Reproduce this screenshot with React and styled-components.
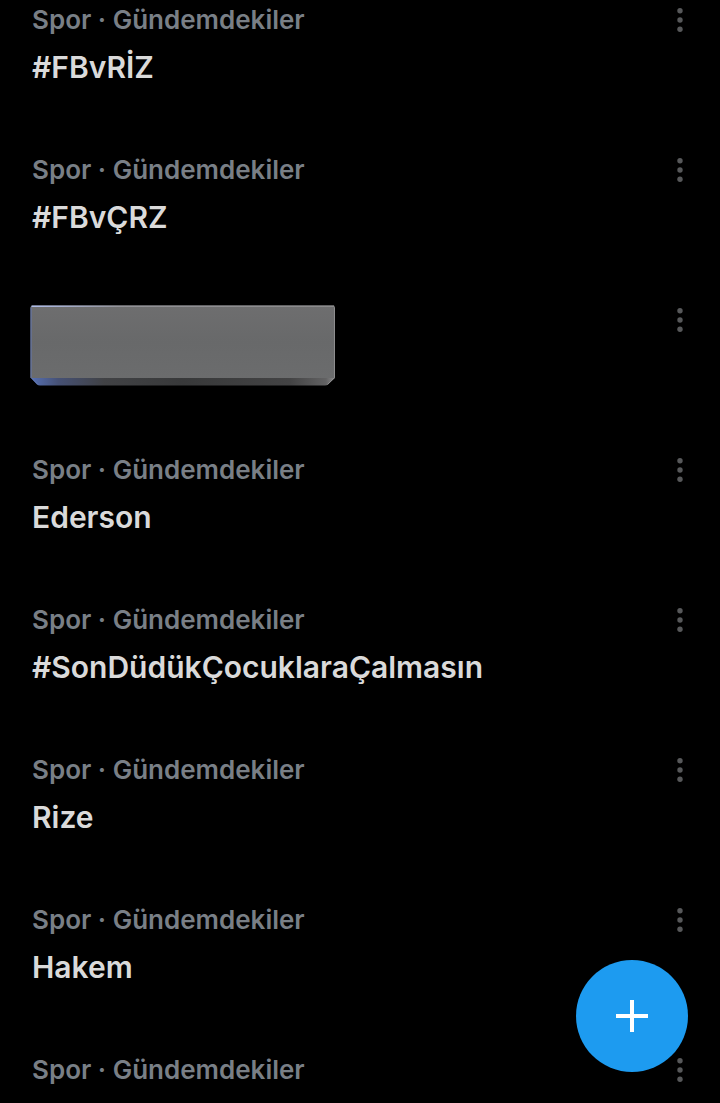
import React from 'react';
import styled, { createGlobalStyle } from 'styled-components';

const GlobalStyle = createGlobalStyle`
  * { box-sizing: border-box; }
  body { margin: 0; background: #000; font-family: Inter, "Liberation Sans", sans-serif; }
`;

const Page = styled.main`
  min-height: 100vh;
  background: #000;
`;

const TrendList = styled.ul`
  list-style: none;
  margin: 0;
  padding: 4px 32px 0;
  display: flex;
  flex-direction: column;
  gap: 66px;
`;

const Trend = styled.li`
  display: flex;
  justify-content: space-between;
  align-items: flex-start;
  min-height: ${({ $partial }) => ($partial ? '32px' : '84px')};
`;

const TrendText = styled.div`
  display: flex;
  flex-direction: column;
  gap: 11px;
  min-width: 0;
`;

const Category = styled.span`
  font-size: 26px;
  font-weight: 600;
  line-height: 32px;
  color: #797f86;
`;

const Topic = styled.a`
  font-size: 30px;
  font-weight: 600;
  line-height: 40px;
  color: #dadada;
  text-decoration: none;
`;

const MoreButton = styled.button`
  display: flex;
  justify-content: center;
  width: 16px;
  height: 32px;
  padding: 0;
  border: 0;
  background: none;
  cursor: pointer;
`;

const Cover = styled.svg`
  display: block;
  margin: 1px 0 0 -2px;
`;

const ComposeButton = styled.button`
  position: fixed;
  right: 32px;
  bottom: 31px;
  width: 112px;
  height: 112px;
  padding: 0;
  border: 0;
  border-radius: 50%;
  background: #1d9bf0;
  display: flex;
  align-items: center;
  justify-content: center;
  cursor: pointer;
`;

const trends = [
  { id: 1, topic: '#FBvRİZ' },
  { id: 2, topic: '#FBvÇRZ' },
  { id: 3, covered: true },
  { id: 4, topic: 'Ederson' },
  { id: 5, topic: '#SonDüdükÇocuklaraÇalmasın' },
  { id: 6, topic: 'Rize' },
  { id: 7, topic: 'Hakem' },
  { id: 8 },
];

function CoveredTrend() {
  return (
    <Cover width="306" height="81" viewBox="0 0 306 81" aria-hidden="true">
      <defs>
        <linearGradient id="face" x1="0" y1="0" x2="0" y2="1">
          <stop offset="0" stopColor="#6e6e6f" />
          <stop offset="0.5" stopColor="#68696a" />
          <stop offset="1" stopColor="#6b6c6d" />
        </linearGradient>
        <linearGradient id="bevel" x1="0" y1="0" x2="1" y2="0">
          <stop offset="0" stopColor="#5670b4" />
          <stop offset="0.09" stopColor="#465175" />
          <stop offset="0.24" stopColor="#414245" />
          <stop offset="0.5" stopColor="#38393a" />
          <stop offset="0.85" stopColor="#434344" />
          <stop offset="0.97" stopColor="#626263" />
          <stop offset="1" stopColor="#8b8b8c" />
        </linearGradient>
        <linearGradient id="edge" gradientUnits="userSpaceOnUse" x1="0" y1="0" x2="306" y2="0">
          <stop offset="0" stopColor="#aebcea" />
          <stop offset="0.3" stopColor="#929297" />
          <stop offset="1" stopColor="#8a8a8b" />
        </linearGradient>
      </defs>
      <path d="M1 73H305L298 79.500Q297 80.500 295 80.500H10Q8 80.500 7 79.500Z" fill="url(#bevel)" />
      <path d="M2 0.500H304L305 2V73H0.500V2Z" fill="url(#face)" />
      <path d="M1.500 1.200H304" stroke="url(#edge)" strokeWidth="1.400" />
      <path d="M1 2.500V72.500L8 79.500" fill="none" stroke="#6479b2" />
      <path d="M304.500 2.500V72.500L297.500 79.500" fill="none" stroke="#8d8d8e" />
    </Cover>
  );
}

function MoreIcon() {
  return (
    <svg width="8" height="32" viewBox="0 0 8 32" fill="#57585a" aria-hidden="true">
      <circle cx="4" cy="6.7" r="2.7" />
      <circle cx="4" cy="16" r="2.7" />
      <circle cx="4" cy="25.3" r="2.7" />
    </svg>
  );
}

export default function App() {
  return (
    <Page>
      <GlobalStyle />
      <TrendList>
        {trends.map(({ id, topic, covered }) => (
          <Trend key={id} $partial={!topic && !covered}>
            {covered ? (
              <CoveredTrend />
            ) : (
              <TrendText>
                <Category>Spor · Gündemdekiler</Category>
                {topic && <Topic href="#">{topic}</Topic>}
              </TrendText>
            )}
            <MoreButton type="button" aria-label="Daha fazla">
              <MoreIcon />
            </MoreButton>
          </Trend>
        ))}
      </TrendList>
      <ComposeButton type="button" aria-label="Yeni gönderi">
        <svg width="32" height="32" viewBox="0 0 32 32" aria-hidden="true">
          <path d="M16 0V32M0 16H32" stroke="#fff" strokeWidth="4" />
        </svg>
      </ComposeButton>
    </Page>
  );
}
